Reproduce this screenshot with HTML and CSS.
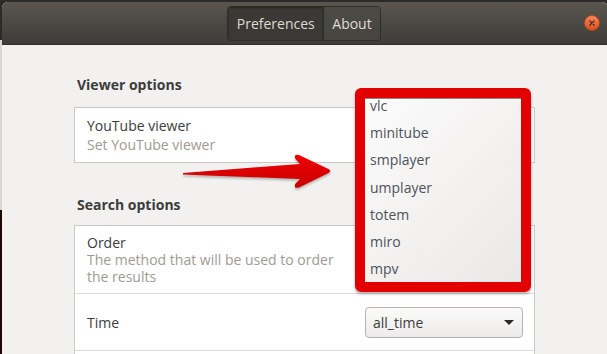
FILE: index.html
```html
<!DOCTYPE html>
<html lang="en">
<head>
    <meta charset="UTF-8">
    <meta name="viewport" content="width=device-width, initial-scale=1.0">
    <title>Preferences</title>
    <link rel="stylesheet" href="styles.css">
</head>
<body>
    <div class="screen">
        <div class="window">
            <header class="titlebar">
                <div class="switcher">
                    <button class="tab active">Preferences</button>
                    <button class="tab">About</button>
                </div>
                <span class="close">
                    <svg width="16" height="16" viewBox="0 0 16 16">
                        <defs>
                            <linearGradient id="closeFill" x1="0" y1="0" x2="0" y2="1">
                                <stop offset="0" stop-color="#f68a5c"/>
                                <stop offset="1" stop-color="#dc4a19"/>
                            </linearGradient>
                        </defs>
                        <circle cx="8" cy="8" r="7.5" fill="url(#closeFill)" stroke="#b8421a" stroke-width="0.8"/>
                        <path d="M5.8 5.8 L10.2 10.2 M10.2 5.8 L5.8 10.2" stroke="#3a2a22" stroke-width="1.2" stroke-linecap="round"/>
                    </svg>
                </span>
            </header>

            <main class="content">
                <h2 class="section-title">Viewer options</h2>
                <div class="list">
                    <div class="row">
                        <div class="row-text">
                            <div class="row-title">YouTube viewer</div>
                            <div class="row-sub">Set YouTube viewer</div>
                        </div>
                    </div>
                </div>

                <h2 class="section-title second">Search options</h2>
                <div class="list">
                    <div class="row row-order">
                        <div class="row-text compact">
                            <div class="row-title">Order</div>
                            <div class="row-sub">The method that will be used to order<br>the results</div>
                        </div>
                    </div>
                    <div class="row row-time">
                        <div class="row-title">Time</div>
                        <div class="combo">
                            <span>all_time</span>
                            <span class="caret"></span>
                        </div>
                    </div>
                    <div class="row row-empty"></div>
                </div>
            </main>
        </div>

        <svg class="arrow" width="156" height="44" viewBox="180 148 156 44">
            <defs>
                <linearGradient id="arrowFill" x1="0" y1="0" x2="0" y2="1">
                    <stop offset="0" stop-color="#f00000"/>
                    <stop offset="1" stop-color="#c80000"/>
                </linearGradient>
            </defs>
            <path d="M183 171 L300 162 L295.5 157 Q293 151.5 299 153 L328.5 167 Q332 169 328.5 171 L299 185.5 Q293 187 295.5 181.5 L300 177 L183 172.5 Z" fill="url(#arrowFill)"/>
        </svg>

        <div class="callout">
            <ul class="menu">
                <li>vlc</li>
                <li>minitube</li>
                <li>smplayer</li>
                <li>umplayer</li>
                <li>totem</li>
                <li>miro</li>
                <li>mpv</li>
            </ul>
        </div>
    </div>
</body>
</html>
```

FILE: styles.css
```css
* {
    margin: 0;
    padding: 0;
    box-sizing: border-box;
}

body {
    font-family: 'Open Sans', 'Noto Sans', sans-serif;
    font-size: 14px;
    color: #3c3c3c;
    width: 607px;
    height: 354px;
    overflow: hidden;
    background: linear-gradient(to bottom, #2c2b29 0, #2c2b29 40px, #d9d7d4 40px, #d9d7d4 210px, #1c0906 210px);
}

.screen {
    position: relative;
    width: 607px;
    height: 354px;
}

.window {
    margin: 2px 0 0 2px;
    width: 606px;
    height: 352px;
    background: #f2f1f0;
    border-radius: 6px 6px 0 0;
    overflow: hidden;
}

.titlebar {
    height: 43px;
    display: grid;
    grid-template-columns: 1fr auto 1fr;
    align-items: center;
    background: linear-gradient(to bottom, #5a564f, #3d3c38);
    border-bottom: 1px solid #2f2e2b;
}

.switcher {
    grid-column: 2;
    display: flex;
    height: 35px;
    border: 1px solid #2d2c29;
    border-radius: 4px;
    overflow: hidden;
    margin-left: -2px;
}

.tab {
    font-family: inherit;
    font-size: 14px;
    color: #dfdbd2;
    border: none;
    padding: 0 8px;
    background: linear-gradient(to bottom, #4d4b46, #46443f);
}

.tab.active {
    width: 96px;
    background: #3a3935;
    box-shadow: inset 0 1px 2px rgba(0, 0, 0, 0.35);
    border-right: 1px solid #2d2c29;
}

.close {
    grid-column: 3;
    justify-self: end;
    margin-right: 8px;
    width: 16px;
    height: 16px;
}

.close svg {
    display: block;
}

.content {
    padding: 30px 0 0 72px;
}

.section-title {
    font-size: 14px;
    font-weight: bold;
    line-height: 20px;
    color: #3c3c3c;
    margin: 0 0 12px 3px;
}

.section-title.second {
    margin-top: 32px;
    margin-bottom: 10px;
}

.list {
    width: 461px;
    background: #fff;
    border: 1px solid #cbc8c4;
}

.row {
    padding: 8px 12px;
    display: flex;
    align-items: center;
    justify-content: space-between;
}

.row + .row {
    border-top: 1px solid #dedbd8;
}

.row-title,
.row-sub {
    line-height: 19px;
}

.row-sub {
    color: #a09a94;
}

.compact .row-title,
.compact .row-sub {
    line-height: 17px;
}

.row-time {
    height: 57px;
    padding: 0 12px 0 12px;
}

.row-time .row-title {
    line-height: 17px;
}

.combo {
    width: 158px;
    height: 31px;
    border: 1px solid #b7b4af;
    border-radius: 4px;
    background: linear-gradient(to bottom, #fbfbfa, #ecebe9);
    display: flex;
    align-items: center;
    justify-content: space-between;
    padding: 0 8px 0 7px;
    margin-right: -1px;
    color: #3c3c3c;
}

.caret {
    width: 0;
    height: 0;
    border-left: 5px solid transparent;
    border-right: 5px solid transparent;
    border-top: 5px solid #2a2a2a;
}

.row-empty {
    height: 20px;
}

.arrow {
    position: absolute;
    left: 180px;
    top: 148px;
    filter: drop-shadow(0 2px 1px rgba(0, 0, 0, 0.25));
}

.callout {
    position: absolute;
    left: 355px;
    top: 86px;
    width: 176px;
    height: 204px;
    border: 10px solid #e30000;
    border-radius: 6px;
    box-shadow: 0 2px 3px rgba(0, 0, 0, 0.3);
    background: linear-gradient(135deg, #fbfbfb 0%, #f3f2f1 50%, #eae8e6 100%);
    overflow: hidden;
}

.menu {
    list-style: none;
    border-top: 1px solid #8a8885;
}

.menu li {
    height: 27.2px;
    line-height: 27px;
    padding-left: 5px;
    color: #4d525a;
}

.menu li:first-child {
    margin-top: -7px;
}
```
